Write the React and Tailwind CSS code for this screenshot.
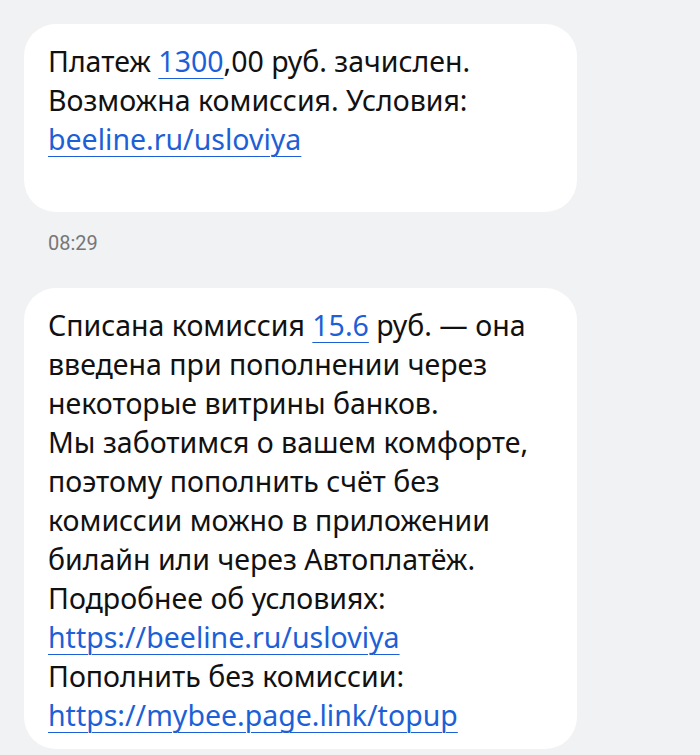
export default function App() {
  const link = "text-[#1d5fd6] underline decoration-1 underline-offset-[6px]";
  return (
    <div
      className="w-[700px] h-[755px] bg-[#f1f2f4] overflow-hidden pt-[24px] text-[#111111]"
      style={{ fontFamily: "'Noto Sans', Roboto, sans-serif" }}
    >
      <div className="ml-[24px] w-[553px] bg-white rounded-[32px] pl-[24px] pt-[18px] pb-[53px] text-[28.5px] leading-[39px] whitespace-nowrap">
        <div>
          Платеж <span className={link}>1300</span>,00 руб. зачислен.
        </div>
        <div>Возможна комиссия. Условия:</div>
        <div>
          <span className={link}>beeline.ru/usloviya</span>
        </div>
      </div>
      <div className="ml-[48px] mt-[20px] text-[20px] leading-[22px] text-[#777777]" style={{ fontFamily: "Roboto, sans-serif" }}>08:29</div>
      <div className="ml-[24px] mt-[34px] w-[553px] bg-white rounded-[32px] pl-[24px] pt-[18px] pb-[14px] text-[28.5px] leading-[39px] whitespace-nowrap">
        <div>
          Списана комиссия <span className={link}>15.6</span> руб. — она
        </div>
        <div>введена при пополнении через</div>
        <div>некоторые витрины банков.</div>
        <div>Мы заботимся о вашем комфорте,</div>
        <div>поэтому пополнить счёт без</div>
        <div>комиссии можно в приложении</div>
        <div>билайн или через Автоплатёж.</div>
        <div>Подробнее об условиях:</div>
        <div>
          <span className={link}>https://beeline.ru/usloviya</span>
        </div>
        <div>Пополнить без комиссии:</div>
        <div>
          <span className={link}>https://mybee.page.link/topup</span>
        </div>
      </div>
    </div>
  );
}
